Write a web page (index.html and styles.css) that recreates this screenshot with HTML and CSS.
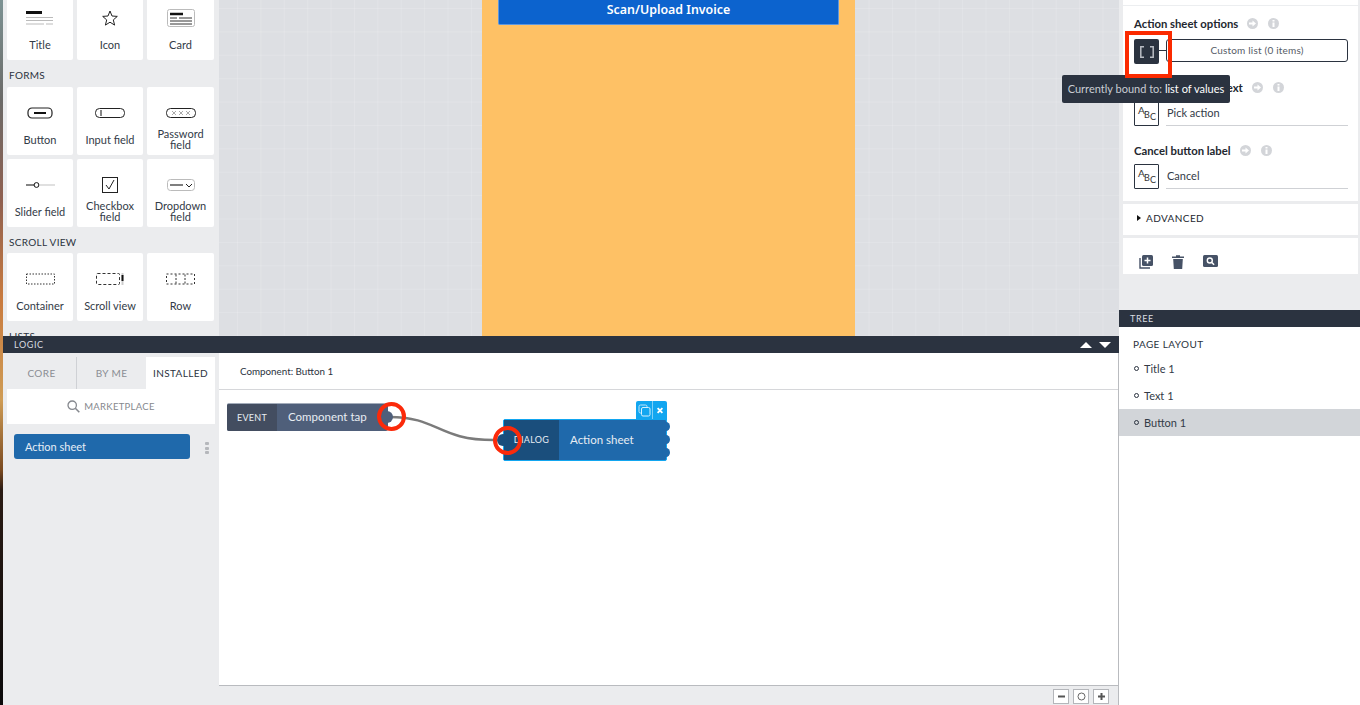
FILE: index.html

```html
<!DOCTYPE html>
<html lang="en">
<head>
  <meta charset="UTF-8">
  <title>Composer</title>
  <link rel="stylesheet" href="styles.css">
</head>
<body>
  <div class="app">
    <div class="wallpaper"></div>

    <div class="main">
      <div class="top">
        <div class="palette">
          <div class="palette-inner">
            <div class="grid">
              <div class="tile">
                <svg class="ico" width="28" height="14" viewBox="0 0 28 14"><path d="M0 1.500h16" stroke="#111" stroke-width="3"/><path d="M0 6.500h27M0 9.500h27M0 13h18M20 13h7" stroke="#bbb" stroke-width="1"/></svg>
                <span>Title</span>
              </div>
              <div class="tile">
                <svg class="ico" width="16" height="16" viewBox="0 0 16 16"><path d="M8 1l2 5 5.300.4-4 3.500 1.300 5.200L8 12.200 3.400 15.100l1.300-5.200-4-3.500L6 6z" fill="none" stroke="#222" stroke-width="1"/></svg>
                <span>Icon</span>
              </div>
              <div class="tile">
                <svg class="ico" width="28" height="18" viewBox="0 0 28 18"><rect x=".5" y=".5" width="27" height="17" rx="2" fill="none" stroke="#bbb"/><path d="M3 5h13" stroke="#111" stroke-width="2.500"/><path d="M3 9h7M12 9h13M3 12h22M3 15h22" stroke="#333" stroke-width="1"/></svg>
                <span>Card</span>
              </div>
            </div>

            <div class="group first">FORMS</div>
            <div class="grid">
              <div class="tile">
                <svg class="ico" width="26" height="12" viewBox="0 0 26 12"><rect x="1" y="1" width="24" height="10" rx="4" fill="none" stroke="#222" stroke-width="1.200"/><path d="M7 6h12" stroke="#111" stroke-width="2"/></svg>
                <span>Button</span>
              </div>
              <div class="tile">
                <svg class="ico" width="30" height="10" viewBox="0 0 30 10"><rect x=".5" y=".5" width="29" height="9" rx="4" fill="none" stroke="#222"/><path d="M6 2v6" stroke="#111" stroke-width="1"/></svg>
                <span>Input field</span>
              </div>
              <div class="tile two">
                <svg class="ico" width="30" height="10" viewBox="0 0 30 10"><rect x=".5" y=".5" width="29" height="9" rx="4" fill="none" stroke="#222"/><path d="M6 3l4 4M10 3l-4 4M13 3l4 4M17 3l-4 4M20 3l4 4M24 3l-4 4" stroke="#aaa" stroke-width="1"/></svg>
                <span>Password field</span>
              </div>
              <div class="tile">
                <svg class="ico" width="29" height="6" viewBox="0 0 29 6"><path d="M0 3h8" stroke="#333" stroke-width="1.200"/><path d="M14 3h15" stroke="#ccc" stroke-width="1.200"/><circle cx="10.500" cy="3" r="2.400" fill="none" stroke="#111" stroke-width="1"/></svg>
                <span>Slider field</span>
              </div>
              <div class="tile two">
                <svg class="ico" width="16" height="16" viewBox="0 0 16 16"><rect x=".5" y=".5" width="15" height="15" fill="none" stroke="#222"/><path d="M4 8l3 4 5-9" fill="none" stroke="#222" stroke-width="1"/></svg>
                <span>Checkbox field</span>
              </div>
              <div class="tile two">
                <svg class="ico" width="28" height="12" viewBox="0 0 28 12"><rect x=".5" y=".5" width="27" height="11" rx="3" fill="none" stroke="#bbb"/><path d="M3 6h13" stroke="#555" stroke-width="1.500"/><path d="M19 5l3 3 3-3" fill="none" stroke="#222" stroke-width="1"/></svg>
                <span>Dropdown field</span>
              </div>
            </div>

            <div class="group">SCROLL VIEW</div>
            <div class="grid">
              <div class="tile">
                <svg class="ico" width="29" height="11" viewBox="0 0 29 11"><rect x=".5" y=".5" width="28" height="10" fill="none" stroke="#333" stroke-dasharray="1.500 1.500"/></svg>
                <span>Container</span>
              </div>
              <div class="tile">
                <svg class="ico" width="28" height="12" viewBox="0 0 28 12"><rect x=".5" y=".5" width="23" height="11" rx="1" fill="none" stroke="#333" stroke-dasharray="3 2"/><path d="M26.500 0v12" stroke="#ccc" stroke-width="2"/><path d="M26.500 2v6" stroke="#111" stroke-width="2"/></svg>
                <span>Scroll view</span>
              </div>
              <div class="tile">
                <svg class="ico" width="29" height="11" viewBox="0 0 29 11"><rect x=".5" y=".5" width="28" height="10" fill="none" stroke="#333" stroke-dasharray="2 2"/><path d="M10 1v9M19 1v9" stroke="#333" stroke-dasharray="2 1.500"/></svg>
                <span>Row</span>
              </div>
            </div>

            <div class="group">LISTS</div>
          </div>
        </div>

        <div class="canvas">
          <div class="phone">
            <div class="phone-btn">Scan/Upload Invoice</div>
          </div>
        </div>
      </div>

      <div class="bar">
        <span>LOGIC</span>
        <div class="bar-arrows"><i class="arrow-up"></i><i class="arrow-down"></i></div>
      </div>

      <div class="logic">
        <div class="logic-side">
          <div class="tabs">
            <div class="tab">CORE</div>
            <div class="tab">BY ME</div>
            <div class="tab active">INSTALLED</div>
          </div>
          <div class="market">
            <svg width="13" height="13" viewBox="0 0 13 13"><circle cx="5.200" cy="5.200" r="4.200" fill="none" stroke="#85888e" stroke-width="1.300"/><path d="M8.300 8.300l4 4" stroke="#85888e" stroke-width="1.600"/></svg>
            MARKETPLACE
          </div>
          <div class="flow-row">
            <div class="flow-item">Action sheet</div>
            <div class="dots"><i></i><i></i><i></i></div>
          </div>
        </div>

        <div class="logic-main">
          <div class="logic-title">Component: Button 1</div>
          <div class="diagram">
            <svg class="wire" width="130" height="40" viewBox="0 0 130 40"><path d="M0 6C50 6 48 29 105 29" fill="none" stroke="#7b7b7b" stroke-width="2.500"/></svg>

            <div class="node event">
              <div class="node-tag">EVENT</div>
              <div class="node-name">Component tap</div>
              <div class="port-out"></div>
            </div>

            <div class="node-tools">
              <svg width="13" height="13" viewBox="0 0 13 13"><rect x="1" y="1" width="8" height="8" rx="1.500" fill="none" stroke="#bfe6fb" stroke-width="1"/><rect x="3.500" y="3.500" width="8.500" height="8.500" rx="1.500" fill="#12a6f0" stroke="#d7f0fd" stroke-width="1"/></svg>
              <svg width="10" height="10" viewBox="0 0 10 10"><path d="M2 2l6 6M8 2l-6 6" stroke="#fff" stroke-width="2.300"/></svg>
            </div>
            <div class="node dialog">
              <div class="node-tag">DIALOG</div>
              <div class="node-name">Action sheet</div>
              <div class="port-in"></div>
              <div class="outs"><i></i><i></i><i></i></div>
            </div>

            <div class="ring ring-a"></div>
            <div class="ring ring-b"></div>
          </div>
          <div class="zoom-bar">
            <div class="zoom-btn"><svg width="9" height="9" viewBox="0 0 9 9"><path d="M1 4.500h7" stroke="#555" stroke-width="2"/></svg></div>
            <div class="zoom-btn"><svg width="9" height="9" viewBox="0 0 9 9"><circle cx="4.500" cy="4.500" r="3.500" fill="none" stroke="#666" stroke-width="1"/></svg></div>
            <div class="zoom-btn"><svg width="9" height="9" viewBox="0 0 9 9"><path d="M1 4.500h7M4.500 1v7" stroke="#555" stroke-width="2"/></svg></div>
          </div>
        </div>
      </div>
    </div>

    <div class="side">
      <div class="props">
        <div class="card fields">
          <div class="field">
            <div class="field-label">
              <span>Action sheet options</span>
              <svg class="go" width="11" height="11" viewBox="0 0 11 11"><circle cx="5.500" cy="5.500" r="5.500" fill="#d3d5d9"/><path d="M2 4.500h3.500V2.500l3.500 3-3.500 3v-2H2z" fill="#fff"/></svg>
              <svg class="info" width="11" height="11" viewBox="0 0 11 11"><circle cx="5.500" cy="5.500" r="5.500" fill="#d3d5d9"/><path d="M4.500 2h2v1.600h-2zM4.500 4.500h2V9h-2z" fill="#fff"/></svg>
            </div>
            <div class="field-row">
              <div class="bind">
                <svg width="14" height="12" viewBox="0 0 14 12"><path d="M4 .8H.8v10.400H4M10 .8h3.200v10.400H10" fill="none" stroke="#b9bdc4" stroke-width="1.500"/></svg>
              </div>
              <div class="bind-line"></div>
              <div class="list-btn">Custom list (0 items)</div>
            </div>
          </div>

          <div class="field">
            <div class="field-label">
              <span>Action sheet info text</span>
              <svg class="go" width="11" height="11" viewBox="0 0 11 11"><circle cx="5.500" cy="5.500" r="5.500" fill="#d3d5d9"/><path d="M2 4.500h3.500V2.500l3.500 3-3.500 3v-2H2z" fill="#fff"/></svg>
              <svg class="info" width="11" height="11" viewBox="0 0 11 11"><circle cx="5.500" cy="5.500" r="5.500" fill="#d3d5d9"/><path d="M4.500 2h2v1.600h-2zM4.500 4.500h2V9h-2z" fill="#fff"/></svg>
            </div>
            <div class="field-row">
              <div class="abc"><span>A</span><span class="b">B</span><span class="c">C</span></div>
              <div class="text-input">Pick action</div>
            </div>
          </div>

          <div class="field">
            <div class="field-label">
              <span>Cancel button label</span>
              <svg class="go" width="11" height="11" viewBox="0 0 11 11"><circle cx="5.500" cy="5.500" r="5.500" fill="#d3d5d9"/><path d="M2 4.500h3.500V2.500l3.500 3-3.500 3v-2H2z" fill="#fff"/></svg>
              <svg class="info" width="11" height="11" viewBox="0 0 11 11"><circle cx="5.500" cy="5.500" r="5.500" fill="#d3d5d9"/><path d="M4.500 2h2v1.600h-2zM4.500 4.500h2V9h-2z" fill="#fff"/></svg>
            </div>
            <div class="field-row">
              <div class="abc"><span>A</span><span class="b">B</span><span class="c">C</span></div>
              <div class="text-input">Cancel</div>
            </div>
          </div>
        </div>

        <div class="card advanced"><i class="caret"></i>ADVANCED</div>

        <div class="card actions">
          <svg width="14" height="14" viewBox="0 0 14 14"><path d="M1 3v10h10" fill="none" stroke="#465266" stroke-width="1.400"/><rect x="3" y="0" width="11" height="11" rx="1.500" fill="#465266"/><path d="M8.500 2.500v6M5.500 5.500h6" stroke="#fff" stroke-width="1.500"/></svg>
          <svg width="12" height="14" viewBox="0 0 12 14"><path d="M0 1.500h12v1.500H0zM4 .2h4v1.500H4z" fill="#465266"/><path d="M1.200 4h9.600l-.6 10H1.800z" fill="#465266"/></svg>
          <svg width="15" height="12" viewBox="0 0 15 12"><rect width="15" height="12" rx="1.500" fill="#465266"/><circle cx="6.800" cy="5.500" r="2.500" fill="none" stroke="#fff" stroke-width="1.400"/><path d="M8.800 7.500l2.300 2.300" stroke="#fff" stroke-width="1.600"/></svg>
        </div>
      </div>

      <div class="bar tree-bar"><span>TREE</span></div>

      <div class="tree">
        <div class="tree-head">PAGE LAYOUT</div>
        <div class="tree-item"><i></i>Title 1</div>
        <div class="tree-item"><i></i>Text 1</div>
        <div class="tree-item selected"><i></i>Button 1</div>
      </div>
    </div>
  </div>

  <div class="tip">Currently bound to: <b>list of values</b></div>
  <div class="mark"></div>
</body>
</html>
```

FILE: styles.css

```css
* { box-sizing: border-box; }
html, body { margin: 0; height: 100%; overflow: hidden; }
body { font-family: Lato, "Open Sans", sans-serif; font-size: 11px; color: #2b3340; background: #ebecee; position: relative; }
i { display: block; }

.app { display: flex; height: 705px; }
.wallpaper { width: 3px; flex: none; background: linear-gradient(180deg, #7c9293 0, #6b6a68 100px, #8f6050 200px, #c97b3f 300px, #cf9c55 400px, #7a4a20 470px, #2a1b14 490px, #0b0a0b 705px); }
.main { width: 1116px; flex: none; display: flex; flex-direction: column; }
.side { flex: 1; display: flex; flex-direction: column; }

/* top half */
.top { height: 336px; display: flex; overflow: hidden; }
.palette { width: 216px; background: #ebecee; overflow: hidden; flex: none; }
.palette-inner { margin-top: -8px; padding: 0 4px; }
.grid { display: grid; grid-template-columns: 66px 66px 67px; gap: 4px; }
.tile { height: 68px; background: #fff; border-radius: 2px; display: flex; flex-direction: column; align-items: center; padding-top: 17px; text-align: center; line-height: 11px; font-size: 11px; color: #333b47; }
.ico { height: 18px; display: block; flex: none; }
.tile span { margin-top: 12px; }
.tile.two span { margin-top: 7px; padding: 0 8px; line-height: 10.500px; }
.group { height: 26px; line-height: 30px; padding-left: 2px; font-size: 10px; color: #2b3340; letter-spacing: .3px; }
.group.first { height: 27px; }

.canvas { flex: 1; background-color: #dddfe3; background-image: linear-gradient(rgba(255,255,255,.14) 1px, transparent 1px), linear-gradient(90deg, rgba(255,255,255,.14) 1px, transparent 1px); background-size: 23.400px 23.400px; background-position: 18px 8px; padding-left: 263px; }
.phone { width: 373px; height: 100%; background: #fec165; padding: 0 16px; }
.phone-btn { height: 25px; background: #0c63ce; border: 1px solid #5d97df; border-top: 0; border-radius: 0 0 2px 2px; color: #fff; font-family: "Noto Sans", sans-serif; font-weight: 600; font-size: 12.400px; line-height: 20px; text-align: center; }

/* dark header bars */
.bar { height: 17px; flex: none; background: #2b3340; color: #d9dce1; font-size: 9px; letter-spacing: .6px; line-height: 17px; padding: 0 11px; display: flex; justify-content: space-between; align-items: center; }
.bar-arrows { display: flex; gap: 7px; margin-right: -3px; }
.arrow-up { border: 6px solid transparent; border-top: 0; border-bottom: 6px solid #fff; }
.arrow-down { border: 6px solid transparent; border-bottom: 0; border-top: 6px solid #fff; }

/* logic */
.logic { flex: 1; display: flex; min-height: 0; }
.logic-side { width: 216px; flex: none; background: #ebecee; padding: 4px 4px 0; }
.tabs { display: flex; height: 32px; width: 208px; }
.tab { width: 70px; border-right: 1px solid #cfd1d5; text-align: center; line-height: 32px; font-size: 10px; letter-spacing: .4px; color: #8a8d93; }
.tab:nth-child(2) { width: 69px; border-right: 0; }
.tab.active { width: 69px; background: #fff; border-right: 0; color: #2b3340; }
.market { height: 35px; width: 208px; background: #fff; display: flex; align-items: center; justify-content: center; gap: 4px; font-size: 9.500px; letter-spacing: .3px; color: #85888e; }
.flow-row { display: flex; align-items: center; margin-top: 10px; padding-left: 7px; }
.flow-item { width: 176px; height: 25px; background: #1f69ab; border-radius: 3px; color: #e6eef6; font-size: 11px; line-height: 25px; padding-left: 11px; }
.dots { margin-left: 15px; display: flex; flex-direction: column; gap: 1.500px; margin-top: 3px; }
.dots i { width: 4px; height: 3px; background: #b5b7bb; border-radius: 1px; }

.logic-main { flex: 1; display: flex; flex-direction: column; border-right: 1px solid #b9bbbf; min-width: 0; background: #fff; }
.logic-title { height: 37px; border-bottom: 1px solid #d6d7da; line-height: 36px; padding-left: 21px; font-size: 9.800px; color: #2b3340; }
.diagram { flex: 1; position: relative; }
.wire { position: absolute; left: 170px; top: 21px; }

.node { position: absolute; display: flex; color: #e8edf3; }
.node-tag { display: flex; align-items: center; justify-content: center; font-size: 9px; letter-spacing: .3px; padding-bottom: 1px; }
.node-name { flex: 1; font-size: 11.500px; display: flex; align-items: center; padding-bottom: 2px; }
.event { left: 8px; top: 13px; width: 161px; height: 28px; background: #4f5f7a; border-radius: 2px; border-top: 1px solid #a3acba; }
.event .node-tag { width: 50px; background: #434d60; border-radius: 2px 0 0 2px; }
.event .node-name { padding-left: 11px; padding-bottom: 3px; }
.port-out { position: absolute; right: -5px; top: 7px; width: 12px; height: 12px; border-radius: 50%; background: #4f5f7a; }
.dialog { left: 284px; top: 29px; width: 164px; height: 42px; background: #1f69ab; border: 1px solid #12a6f0; border-radius: 2px; }
.dialog .node-tag { width: 55px; background: #1a4e7c; }
.dialog .node-name { padding-left: 11px; }
.port-in { position: absolute; left: -7px; top: 14px; width: 12px; height: 12px; border-radius: 50%; background: #1a4e7c; }
.outs { position: absolute; right: -4px; top: 2px; display: flex; flex-direction: column; gap: 4px; }
.outs i { width: 8px; height: 9px; border-radius: 50%; background: #1f69ab; }
.node-tools { position: absolute; left: 417px; top: 11px; width: 31px; height: 19px; background: #12a6f0; display: flex; align-items: center; padding: 0; border-radius: 2px 2px 0 0; }
.node-tools svg:first-child { margin-left: 2px; margin-right: 1px; }
.node-tools svg:last-child { margin-left: 0; border-left: 1px solid #7fd0f7; width: 15px; height: 19px; padding: 4px 3px; }
.ring { position: absolute; width: 29px; height: 29px; border: 4px solid #fb2a0a; border-radius: 50%; }
.ring-a { left: 158px; top: 12px; }
.ring-b { left: 274px; top: 36px; }

.zoom-bar { height: 20px; background: #ebecee; border-top: 1px solid #b9bbbf; display: flex; justify-content: flex-end; gap: 4px; padding: 3px 9px 0 0; }
.zoom-btn { width: 16px; height: 15px; background: #fff; border: 1px solid #b4b6ba; display: flex; align-items: center; justify-content: center; }

/* right panel */
.props { height: 310px; flex: none; background: #ebecee; padding: 0 2px 0 4px; display: flex; flex-direction: column; gap: 3px; }
.card { background: #fff; }
.fields { height: 201px; padding-top: 5px; }
.field { padding: 0 10px 0 11px; margin-top: 16px; }
.field:first-child { margin-top: 0; border-top: 1px solid #eceef0; padding-top: 9px; }
.field:nth-child(2) { margin-top: 15px; }
.field-label { display: flex; align-items: center; height: 16px; font-size: 11.300px; font-weight: 700; color: #23272f; }
.field-label .go { margin-left: 9px; }
.field-label .info { margin-left: 10px; }
.field-row { display: flex; margin-top: 6px; }
.field:first-child .field-row { margin-top: 8px; }
.bind { width: 25px; height: 25px; background: #2b3340; border-radius: 2px; display: flex; align-items: center; justify-content: center; flex: none; }
.bind-line { width: 7px; height: 1px; background: #2b3340; margin-top: 11px; flex: none; }
.list-btn { flex: 1; height: 23px; border: 1px solid #2b3340; border-radius: 3px; line-height: 21px; text-align: center; font-size: 10px; color: #555b66; letter-spacing: .2px; }
.abc { width: 25px; height: 25px; border: 1px solid #2b3340; position: relative; flex: none; font-size: 10px; line-height: 12px; color: #333; border-radius: 1px; }
.abc span { position: absolute; left: 3px; top: 2px; }
.abc .b { left: 9px; top: 7px; font-size: 9px; }
.abc .c { left: 15px; top: 9px; font-size: 9px; }
.text-input { flex: 1; margin-left: 7px; height: 25px; border-bottom: 1px solid #cfd1d5; line-height: 23px; padding-left: 1px; font-size: 11px; color: #333b47; }
.advanced { height: 31px; display: flex; align-items: center; padding: 0 0 3px 14px; font-size: 10px; letter-spacing: .4px; color: #23272f; gap: 5px; }
.caret { border: 3.500px solid transparent; border-right: 0; border-left: 4px solid #111; }
.actions { height: 36px; display: flex; align-items: flex-start; padding: 17px 0 0 16px; gap: 19px; }

.tree { flex: 1; background: #fff; }
.tree-head { font-size: 10px; letter-spacing: .4px; padding: 11px 0 0 14px; height: 28px; color: #2b3340; }
.tree-item { height: 27px; display: flex; align-items: center; gap: 5px; padding-left: 15px; font-size: 11px; color: #333b47; }
.tree-item i { width: 5px; height: 5px; border: 1px solid #2b3340; border-radius: 50%; }
.tree-item.selected { background: #d2d5d9; }

/* overlays */
.tip { position: absolute; left: 1062px; top: 75px; width: 168px; height: 28px; background: #2b3340; border-radius: 2px; color: #c9cdd3; font-size: 11px; line-height: 28px; text-align: center; }
.tip b { color: #fff; font-weight: 400; }
.mark { position: absolute; left: 1125px; top: 31px; width: 47px; height: 47px; border: 4px solid #fb2a00; }
```
